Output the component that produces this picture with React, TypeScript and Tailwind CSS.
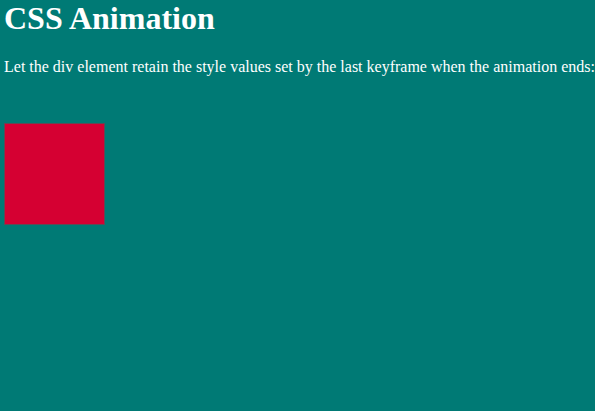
export default function App() {
  return (
    <div className="w-[595px] h-[411px] bg-[#007a75] text-white px-[4px] overflow-hidden" style={{ fontFamily: '"Liberation Serif", serif' }}>
      <h1 className="text-[32px] font-bold leading-[37px] m-0">CSS Animation</h1>
      <p className="text-[16px] leading-[18px] mt-[21px] whitespace-nowrap">
        Let the div element retain the style values set by the last keyframe when the animation ends:
      </p>
      <div className="mt-[47px] w-[101px] h-[102px] bg-[#d50032] border border-[#5e4a55]" />
    </div>
  );
}
